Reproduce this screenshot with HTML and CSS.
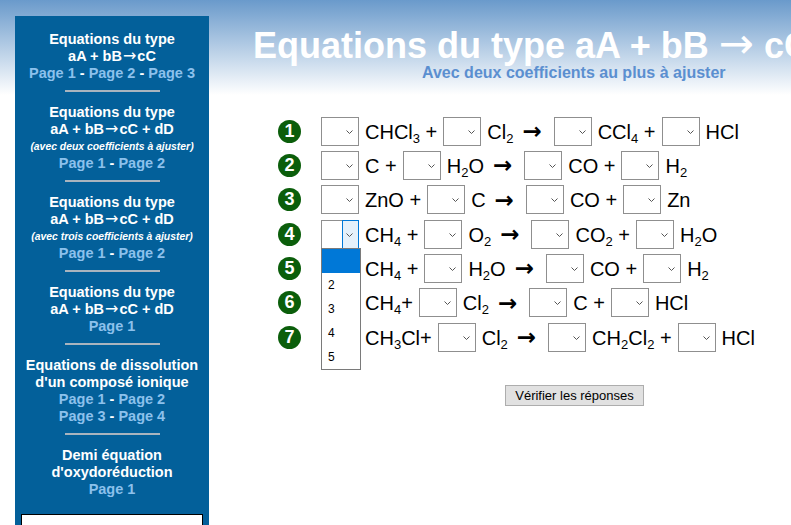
FILE: index.html
```html
<!DOCTYPE html>
<html lang="fr">
<head>
<meta charset="utf-8">
<title>Equations du type aA + bB → cC</title>
<link rel="stylesheet" href="styles.css">
</head>
<body>
<div class="page">
  <nav class="side">
    <div class="sec">
      <p>Equations du type</p>
      <p>aA + bB<span class="sarr">→</span>cC</p>
      <p><a href="#">Page 1</a> - <a href="#">Page 2</a> - <a href="#">Page 3</a></p>
    </div>
    <div class="sep"></div>
    <div class="sec">
      <p>Equations du type</p>
      <p>aA + bB<span class="sarr">→</span>cC + dD</p>
      <p class="note">(avec deux coefficients à ajuster)</p>
      <p><a href="#">Page 1</a> - <a href="#">Page 2</a></p>
    </div>
    <div class="sep"></div>
    <div class="sec">
      <p>Equations du type</p>
      <p>aA + bB<span class="sarr">→</span>cC + dD</p>
      <p class="note">(avec trois coefficients à ajuster)</p>
      <p><a href="#">Page 1</a> - <a href="#">Page 2</a></p>
    </div>
    <div class="sep"></div>
    <div class="sec">
      <p>Equations du type</p>
      <p>aA + bB<span class="sarr">→</span>cC + dD</p>
      <p><a href="#">Page 1</a></p>
    </div>
    <div class="sep"></div>
    <div class="sec">
      <p>Equations de dissolution</p>
      <p>d'un composé ionique</p>
      <p><a href="#">Page 1</a> - <a href="#">Page 2</a></p>
      <p><a href="#">Page 3</a> - <a href="#">Page 4</a></p>
    </div>
    <div class="sep"></div>
    <div class="sec">
      <p>Demi équation</p>
      <p>d'oxydoréduction</p>
      <p><a href="#">Page 1</a></p>
    </div>
    <div class="box"></div>
  </nav>

  <main class="main">
    <h1 class="title">Equations du type aA + bB <span class="tarr">→</span> cC</h1>
    <p class="subtitle">Avec deux coefficients au plus à ajuster</p>

    <div class="eqs">
      <div class="row">
        <span class="num">1</span>
        <span class="sel"><select aria-label="coefficient"><option></option><option>2</option><option>3</option><option>4</option><option>5</option></select><svg class="chev" viewBox="0 0 7 4"><path d="M0.5 0.5 L3.5 3.5 L6.5 0.5"/></svg></span>
        <span class="txt">CHCl<sub>3</sub> +</span>
        <span class="sel"><select aria-label="coefficient"><option></option><option>2</option><option>3</option><option>4</option><option>5</option></select><svg class="chev" viewBox="0 0 7 4"><path d="M0.5 0.5 L3.5 3.5 L6.5 0.5"/></svg></span>
        <span class="txt">Cl<sub>2</sub></span>
        <span class="arr">→</span>
        <span class="sel"><select aria-label="coefficient"><option></option><option>2</option><option>3</option><option>4</option><option>5</option></select><svg class="chev" viewBox="0 0 7 4"><path d="M0.5 0.5 L3.5 3.5 L6.5 0.5"/></svg></span>
        <span class="txt">CCl<sub>4</sub> +</span>
        <span class="sel"><select aria-label="coefficient"><option></option><option>2</option><option>3</option><option>4</option><option>5</option></select><svg class="chev" viewBox="0 0 7 4"><path d="M0.5 0.5 L3.5 3.5 L6.5 0.5"/></svg></span>
        <span class="txt">HCl</span>
      </div>

      <div class="row">
        <span class="num">2</span>
        <span class="sel"><select aria-label="coefficient"><option></option><option>2</option><option>3</option><option>4</option><option>5</option></select><svg class="chev" viewBox="0 0 7 4"><path d="M0.5 0.5 L3.5 3.5 L6.5 0.5"/></svg></span>
        <span class="txt">C +</span>
        <span class="sel"><select aria-label="coefficient"><option></option><option>2</option><option>3</option><option>4</option><option>5</option></select><svg class="chev" viewBox="0 0 7 4"><path d="M0.5 0.5 L3.5 3.5 L6.5 0.5"/></svg></span>
        <span class="txt">H<sub>2</sub>O</span>
        <span class="arr">→</span>
        <span class="sel"><select aria-label="coefficient"><option></option><option>2</option><option>3</option><option>4</option><option>5</option></select><svg class="chev" viewBox="0 0 7 4"><path d="M0.5 0.5 L3.5 3.5 L6.5 0.5"/></svg></span>
        <span class="txt">CO +</span>
        <span class="sel"><select aria-label="coefficient"><option></option><option>2</option><option>3</option><option>4</option><option>5</option></select><svg class="chev" viewBox="0 0 7 4"><path d="M0.5 0.5 L3.5 3.5 L6.5 0.5"/></svg></span>
        <span class="txt">H<sub>2</sub></span>
      </div>

      <div class="row">
        <span class="num">3</span>
        <span class="sel"><select aria-label="coefficient"><option></option><option>2</option><option>3</option><option>4</option><option>5</option></select><svg class="chev" viewBox="0 0 7 4"><path d="M0.5 0.5 L3.5 3.5 L6.5 0.5"/></svg></span>
        <span class="txt">ZnO +</span>
        <span class="sel"><select aria-label="coefficient"><option></option><option>2</option><option>3</option><option>4</option><option>5</option></select><svg class="chev" viewBox="0 0 7 4"><path d="M0.5 0.5 L3.5 3.5 L6.5 0.5"/></svg></span>
        <span class="txt">C</span>
        <span class="arr">→</span>
        <span class="sel"><select aria-label="coefficient"><option></option><option>2</option><option>3</option><option>4</option><option>5</option></select><svg class="chev" viewBox="0 0 7 4"><path d="M0.5 0.5 L3.5 3.5 L6.5 0.5"/></svg></span>
        <span class="txt">CO +</span>
        <span class="sel"><select aria-label="coefficient"><option></option><option>2</option><option>3</option><option>4</option><option>5</option></select><svg class="chev" viewBox="0 0 7 4"><path d="M0.5 0.5 L3.5 3.5 L6.5 0.5"/></svg></span>
        <span class="txt">Zn</span>
      </div>

      <div class="row">
        <span class="num">4</span>
        <span class="sel open"><select aria-label="coefficient"><option></option><option>2</option><option>3</option><option>4</option><option>5</option></select><span class="focus"></span><svg class="chev" viewBox="0 0 7 4"><path d="M0.5 0.5 L3.5 3.5 L6.5 0.5"/></svg>
          <ul class="list">
            <li class="hl">&nbsp;</li>
            <li>2</li>
            <li>3</li>
            <li>4</li>
            <li>5</li>
          </ul>
        </span>
        <span class="txt">CH<sub>4</sub> +</span>
        <span class="sel"><select aria-label="coefficient"><option></option><option>2</option><option>3</option><option>4</option><option>5</option></select><svg class="chev" viewBox="0 0 7 4"><path d="M0.5 0.5 L3.5 3.5 L6.5 0.5"/></svg></span>
        <span class="txt">O<sub>2</sub></span>
        <span class="arr">→</span>
        <span class="sel"><select aria-label="coefficient"><option></option><option>2</option><option>3</option><option>4</option><option>5</option></select><svg class="chev" viewBox="0 0 7 4"><path d="M0.5 0.5 L3.5 3.5 L6.5 0.5"/></svg></span>
        <span class="txt">CO<sub>2</sub> +</span>
        <span class="sel"><select aria-label="coefficient"><option></option><option>2</option><option>3</option><option>4</option><option>5</option></select><svg class="chev" viewBox="0 0 7 4"><path d="M0.5 0.5 L3.5 3.5 L6.5 0.5"/></svg></span>
        <span class="txt">H<sub>2</sub>O</span>
      </div>

      <div class="row">
        <span class="num">5</span>
        <span class="sel"><select aria-label="coefficient"><option></option><option>2</option><option>3</option><option>4</option><option>5</option></select><svg class="chev" viewBox="0 0 7 4"><path d="M0.5 0.5 L3.5 3.5 L6.5 0.5"/></svg></span>
        <span class="txt">CH<sub>4</sub> +</span>
        <span class="sel"><select aria-label="coefficient"><option></option><option>2</option><option>3</option><option>4</option><option>5</option></select><svg class="chev" viewBox="0 0 7 4"><path d="M0.5 0.5 L3.5 3.5 L6.5 0.5"/></svg></span>
        <span class="txt">H<sub>2</sub>O</span>
        <span class="arr">→</span>
        <span class="sel"><select aria-label="coefficient"><option></option><option>2</option><option>3</option><option>4</option><option>5</option></select><svg class="chev" viewBox="0 0 7 4"><path d="M0.5 0.5 L3.5 3.5 L6.5 0.5"/></svg></span>
        <span class="txt">CO +</span>
        <span class="sel"><select aria-label="coefficient"><option></option><option>2</option><option>3</option><option>4</option><option>5</option></select><svg class="chev" viewBox="0 0 7 4"><path d="M0.5 0.5 L3.5 3.5 L6.5 0.5"/></svg></span>
        <span class="txt">H<sub>2</sub></span>
      </div>

      <div class="row">
        <span class="num">6</span>
        <span class="sel"><select aria-label="coefficient"><option></option><option>2</option><option>3</option><option>4</option><option>5</option></select><svg class="chev" viewBox="0 0 7 4"><path d="M0.5 0.5 L3.5 3.5 L6.5 0.5"/></svg></span>
        <span class="txt">CH<sub>4</sub>+</span>
        <span class="sel"><select aria-label="coefficient"><option></option><option>2</option><option>3</option><option>4</option><option>5</option></select><svg class="chev" viewBox="0 0 7 4"><path d="M0.5 0.5 L3.5 3.5 L6.5 0.5"/></svg></span>
        <span class="txt">Cl<sub>2</sub></span>
        <span class="arr">→</span>
        <span class="sel"><select aria-label="coefficient"><option></option><option>2</option><option>3</option><option>4</option><option>5</option></select><svg class="chev" viewBox="0 0 7 4"><path d="M0.5 0.5 L3.5 3.5 L6.5 0.5"/></svg></span>
        <span class="txt">C +</span>
        <span class="sel"><select aria-label="coefficient"><option></option><option>2</option><option>3</option><option>4</option><option>5</option></select><svg class="chev" viewBox="0 0 7 4"><path d="M0.5 0.5 L3.5 3.5 L6.5 0.5"/></svg></span>
        <span class="txt">HCl</span>
      </div>

      <div class="row">
        <span class="num">7</span>
        <span class="sel"><select aria-label="coefficient"><option></option><option>2</option><option>3</option><option>4</option><option>5</option></select><svg class="chev" viewBox="0 0 7 4"><path d="M0.5 0.5 L3.5 3.5 L6.5 0.5"/></svg></span>
        <span class="txt">CH<sub>3</sub>Cl+</span>
        <span class="sel"><select aria-label="coefficient"><option></option><option>2</option><option>3</option><option>4</option><option>5</option></select><svg class="chev" viewBox="0 0 7 4"><path d="M0.5 0.5 L3.5 3.5 L6.5 0.5"/></svg></span>
        <span class="txt">Cl<sub>2</sub></span>
        <span class="arr">→</span>
        <span class="sel"><select aria-label="coefficient"><option></option><option>2</option><option>3</option><option>4</option><option>5</option></select><svg class="chev" viewBox="0 0 7 4"><path d="M0.5 0.5 L3.5 3.5 L6.5 0.5"/></svg></span>
        <span class="txt">CH<sub>2</sub>Cl<sub>2</sub> +</span>
        <span class="sel"><select aria-label="coefficient"><option></option><option>2</option><option>3</option><option>4</option><option>5</option></select><svg class="chev" viewBox="0 0 7 4"><path d="M0.5 0.5 L3.5 3.5 L6.5 0.5"/></svg></span>
        <span class="txt">HCl</span>
      </div>
    </div>

    <div class="actions">
      <button class="btn" type="button">Vérifier les réponses</button>
    </div>
  </main>
</div>
</body>
</html>
```

FILE: styles.css
```css
html, body {
  margin: 0;
  height: 100%;
  overflow: hidden;
}

body {
  font-family: "Liberation Sans", Arial, sans-serif;
  color: #000;
  background: #fff linear-gradient(#6a9acb 0px, #ffffff 95px) no-repeat;
}

.page {
  display: flex;
  align-items: flex-start;
  min-height: 100%;
}

/* ---------- Sidebar ---------- */
.side {
  flex: none;
  width: 194px;
  margin: 16px 0 0 15px;
  padding-top: 14.5px;
  min-height: calc(100vh - 16px);
  box-sizing: border-box;
  background: #03609a;
  color: #fff;
  text-align: center;
  font-weight: bold;
  font-size: 14.5px;
  line-height: 17px;
}

.sec p {
  margin: 0;
  white-space: nowrap;
}

.sarr {
  display: inline-block;
  font-family: "DejaVu Sans", sans-serif;
  font-weight: normal;
  font-size: 16px;
  line-height: 14px;
  margin: 0 1px;
}

.side a {
  color: #8cc1ec;
  text-decoration: none;
}

.note {
  font-style: italic;
  font-size: 10.4px;
}

.sep {
  width: 95px;
  height: 2px;
  margin: 8.5px auto 11.5px;
  background: #a9b4be;
}

.box {
  margin: 16.5px 6px 0;
  height: 60px;
  background: #fff;
  border: 1px solid #000;
}

/* ---------- Main ---------- */
.main {
  flex: 1;
  min-width: 0;
}

.title {
  margin: 0;
  padding: 26px 0 0 44px;
  font-size: 36px;
  line-height: 39px;
  font-weight: bold;
  color: #fff;
  white-space: nowrap;
}

.tarr {
  font-family: "DejaVu Sans", sans-serif;
  font-weight: normal;
  font-size: 42px;
  line-height: 0;
}

.subtitle {
  margin: 0;
  padding-left: 213px;
  font-size: 16px;
  line-height: 16px;
  font-weight: bold;
  color: #5b8fd0;
  white-space: nowrap;
}

.eqs {
  margin-top: 33px;
  padding-left: 69px;
}

.row {
  display: flex;
  align-items: center;
  gap: 6px;
  height: 34.33px;
  font-size: 20px;
  white-space: nowrap;
}

.num {
  flex: none;
  width: 23px;
  height: 23px;
  margin-right: 14px;
  border-radius: 50%;
  background: #0b5e0b;
  color: #fff;
  font-size: 18px;
  font-weight: bold;
  display: flex;
  align-items: center;
  justify-content: center;
}

.txt {
  padding-top: 2px;
}

sub {
  font-size: 13px;
  line-height: 0;
  vertical-align: -4px;
}

.arr {
  font-family: "DejaVu Sans", sans-serif;
  font-size: 23px;
  line-height: 20px;
  font-weight: bold;
  margin: 0 6px 0 3px;
}

.sel {
  position: relative;
  display: block;
  flex: none;
  width: 38px;
  height: 29px;
}

.sel select {
  -webkit-appearance: none;
  appearance: none;
  display: block;
  width: 100%;
  height: 100%;
  margin: 0;
  padding: 0;
  border: 1px solid #8f8f8f;
  border-radius: 0;
  background: #fff;
  font: 12px "Liberation Sans", Arial, sans-serif;
}

.chev {
  position: absolute;
  right: 6px;
  top: 13px;
  width: 7px;
  height: 4px;
  fill: none;
  stroke: #555;
  stroke-width: 1;
  pointer-events: none;
}

.focus {
  position: absolute;
  top: 0;
  right: 0;
  width: 17px;
  height: 29px;
  box-sizing: border-box;
  border: 1px solid #0078d7;
  background: #e5f1fb;
}

.list {
  position: absolute;
  top: 28px;
  left: 0;
  z-index: 5;
  width: 40px;
  margin: 0;
  padding: 0;
  box-sizing: border-box;
  border: 1px solid #7a7a7a;
  background: #fff;
  font-size: 12px;
  line-height: 24px;
  list-style: none;
}

.list li {
  height: 24px;
  padding-left: 6px;
}

.list li.hl {
  background: #0078d7;
}

.actions {
  padding: 31px 0 0 296px;
}

.btn {
  width: 139px;
  height: 21px;
  padding: 0;
  border: 1px solid #adadad;
  border-radius: 0;
  background: #e1e1e1;
  color: #000;
  font: 13px "Liberation Sans", Arial, sans-serif;
}
```
